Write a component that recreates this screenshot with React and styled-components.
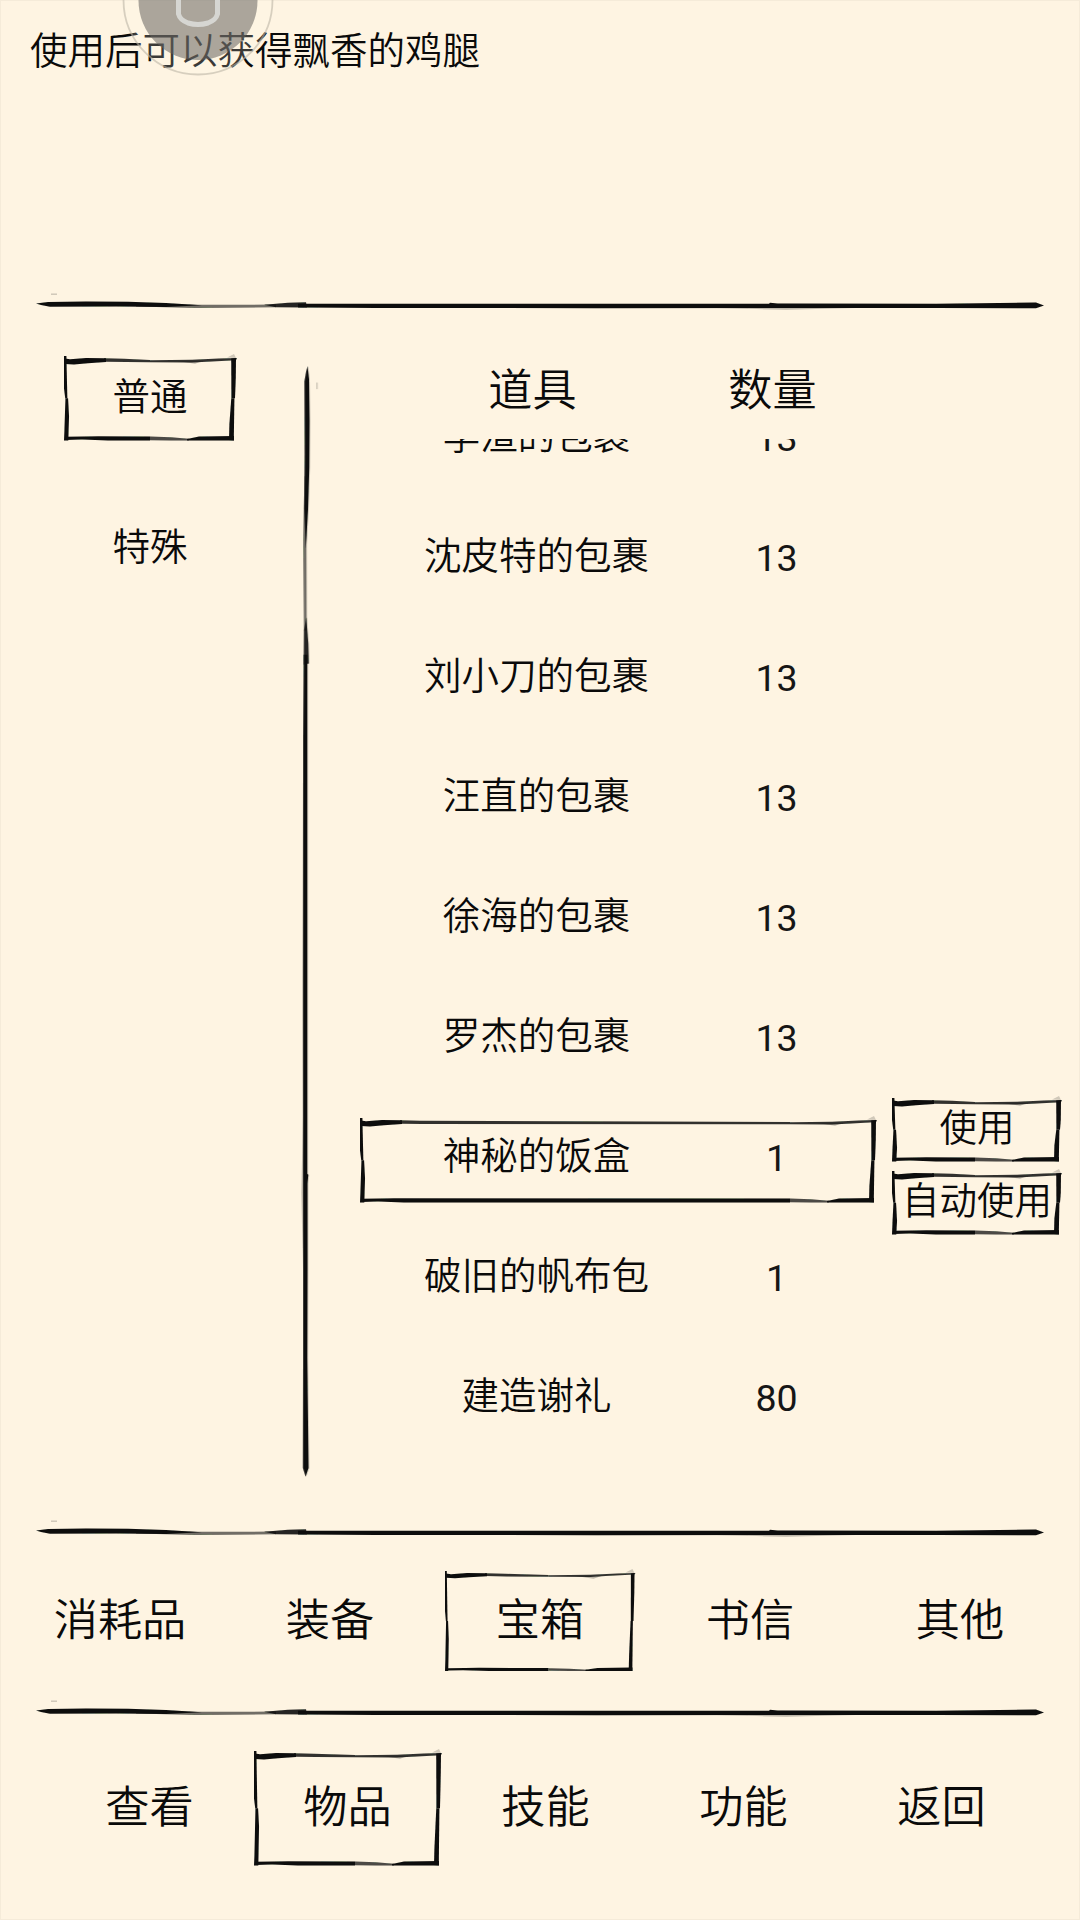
import React, { useState } from "react";
import styled, { createGlobalStyle } from "styled-components";

const GlobalStyle = createGlobalStyle`
  body {
    margin: 0;
    background: #fef4e2;
  }
`;

const Screen = styled.div`
  position: relative;
  display: flex;
  flex-direction: column;
  box-sizing: border-box;
  width: 1080px;
  height: 1920px;
  overflow: hidden;
  background: #fef4e2;
  box-shadow: inset 0 0 0 1px #f5ebd9;
  color: #0a0a0a;
  font-family: Roboto, 'Noto Sans CJK SC', sans-serif;
  font-size: 37.5px;
  font-weight: 350;
  line-height: 44px;
`;

const Description = styled.div`
  box-sizing: border-box;
  height: 294px;
  padding: 29px 30px 0;
`;

const Main = styled.div`
  display: flex;
  height: 1207px;
`;

const Sidebar = styled.div`
  display: flex;
  flex-direction: column;
  align-items: center;
  gap: 65px;
  box-sizing: border-box;
  width: 296px;
  padding: 42px 0 0 4px;
`;

const Cell = styled.button`
  position: relative;
  display: flex;
  align-items: center;
  justify-content: center;
  flex-shrink: 0;
  width: ${props => props.$w}px;
  height: ${props => props.$h}px;
  padding: 0 0 ${props => props.$lift || 0}px;
  box-sizing: border-box;
  border: 0;
  background: none;
  color: inherit;
  font: inherit;
  white-space: nowrap;
  cursor: pointer;
`;

const Content = styled.div`
  flex: 1;
  padding-left: 44px;
`;

const Header = styled.div`
  display: grid;
  grid-template-columns: 345px 135px;
  align-items: center;
  justify-items: center;
  box-sizing: border-box;
  height: 125px;
  padding-top: 28px;
  font-size: 44.2px;
`;

const Viewport = styled.div`
  height: 1050px;
  overflow: hidden;
`;

const List = styled.div`
  margin-top: -65px;
`;

const Row = styled.div`
  position: relative;
  display: grid;
  grid-template-columns: 353px 127px 52px 168px;
  grid-template-rows: 120px;
  align-items: center;
  justify-items: center;
  height: 120px;
  cursor: pointer;
`;

const Name = styled.span`
  padding-top: 3px;
`;

const Count = styled.span`
  padding-top: 7px;
  color: #161616;
  font-weight: 400;
`;

const Actions = styled.div`
  grid-column: 4;
  align-self: start;
  justify-self: start;
  display: flex;
  flex-direction: column;
  gap: 9px;
  padding-top: 4px;
`;

const Bar = styled.div`
  display: flex;
  align-items: center;
  justify-content: center;
  height: ${props => props.$h}px;
  padding-left: ${props => props.$indent || 0}px;
  font-size: 44.2px;
`;

const FrameSvg = styled.svg`
  position: absolute;
  left: ${props => props.$x || 0}px;
  top: ${props => props.$y || 0}px;
  overflow: visible;
  pointer-events: none;
`;

const LineSvg = styled.svg`
  display: block;
  flex-shrink: 0;
  margin-left: ${props => props.$ml || 0}px;
  overflow: visible;
`;

const FloatBall = styled.svg`
  position: absolute;
  left: 122px;
  top: 0;
`;

// Brush box: corners keep their size, the edges stretch with w and h.
const InkFrame = ({ w, h, x, y, t = 1.2 }) => {
  const m = h / 2;
  const b = h - 3.5 * t;
  const c = w - 87;
  return (
    <FrameSvg $x={x} $y={y} width={w} height={h} fill="#0b0d0c">
      <g filter="url(#soft)">
        <path d={`M0 0 L${2 * t} 0 L${2.8 * t} ${m} L${t} ${m} L0 ${m - 10} Z`} />
        <path d={`M${1.2 * t} ${m} L${3.4 * t} ${m} L${4.2 * t} ${m + 18} L${3.6 * t} ${h} L0 ${h} L${0.4 * t} ${h - 12} Z`} />
        <path d={`M1 2.5 L6 3.2 L22 2 L42 2.2 L42 ${3 + 2.6 * t} L24 ${3 + 3.6 * t} L10 ${3 + 4.6 * t} L1 ${3 + 4.2 * t} Z`} />
        <path d={`M40 2.2 L60 2.8 L${c} 4 L${c} ${4 + 1.9 * t} L62 ${3.4 + 2.2 * t} L40 ${3 + 2.3 * t} Z`} opacity="0.85" />
        <path d={`M${c} 4.2 L${w - 45} 3.7 L${w - 18} 2.4 L${w} 2 L${w - 1} ${2 + 1.8 * t} L${w - 30} ${3 + 2.2 * t} L${w - 45} ${4 + 2.1 * t} L${c} ${4.2 + 1.7 * t} Z`} opacity="0.85" />
        <path d={`M${w - 60} 5 L${w - 34} 5 L${w - 42} 7.8 Z`} opacity="0.25" />
        <path d={`M${w - 10} 1.5 L${w - 3} -2 L${w - 1} 2 Z`} opacity="0.18" />
        <path d={`M${w - 4 * t - 1} 2.6 L${w - 1} 2 L${w - 1.2} 22 L${w - 2} ${m} L${w - 2 - 3 * t} ${m} Z`} />
        <path d={`M${w - 2.6 - 2.6 * t} ${m} L${w - 2.6} ${m} L${w - 3.2} ${h} L${w - 3.2 - 4 * t} ${h - 0.5} L${w - 2.6 - 4.2 * t} ${h - 16} Z`} />
        <path d={`M2 ${b + 0.4} L20 ${b + 0.2} L34 ${b} L${c} ${b + 0.2} L${c} ${h} L44 ${h} L18 ${b + 2.6 * t} L2 ${h - 0.4} Z`} />
        <path d={`M${c} ${b + 0.3} L${w - 66} ${b + 1} L${w - 48} ${b + 2 * t} L${w - 48} ${h} L${w - 66} ${h} L${c} ${h - 0.2} Z`} opacity="0.75" />
        <path d={`M${w - 50} ${b + 2.2 * t} L${w - 38} ${b + 0.2} L${w - 3} ${b - 0.4} L${w - 3} ${h} L${w - 50} ${h} Z`} />
      </g>
    </FrameSvg>
  );
};

const Stroke = () => (
  <g fill="#0b0d0c" filter="url(#soft)">
    <path d="M0 9.4 L12 8 L50 7.4 L92 7.8 L130 9 L166 11.2 L130 12.9 L80 12.6 L14 12.8 L5 11 Z" />
    <path d="M100 10 L160 10.8 L240 10.6 L240 13.2 L160 14 L100 12.6 Z" opacity="0.6" />
    <path d="M228 10.8 L252 8.8 L270 8.2 L271 13.6 L240 13.2 Z" opacity="0.9" />
    <path d="M262 9.8 L420 9.7 L733 9.7 L734 8.8 L742 9.5 L900 9.7 L1000 8.6 L1008 11.4 L1000 14.2 L900 14 L560 14.2 L340 14 L262 13.6 Z" />
    <path d="M680 14 L820 14 L750 15.8 Z" opacity="0.25" />
    <path d="M15 -0.5 h6 v1.4 h-6 z" opacity="0.2" />
  </g>
);

const InkLine = () => (
  <LineSvg $ml={36} width="1008" height="20">
    <Stroke />
  </LineSvg>
);

const InkLineVertical = () => (
  <LineSvg width="20" height="1207">
    <g transform="translate(21.2 52) rotate(90) scale(1.102 1)">
      <Stroke />
    </g>
  </LineSvg>
);

const kinds = ["普通", "特殊"];
const items = [
  { name: "李渣的包裹", count: 13 },
  { name: "沈皮特的包裹", count: 13 },
  { name: "刘小刀的包裹", count: 13 },
  { name: "汪直的包裹", count: 13 },
  { name: "徐海的包裹", count: 13 },
  { name: "罗杰的包裹", count: 13 },
  { name: "神秘的饭盒", count: 1 },
  { name: "破旧的帆布包", count: 1 },
  { name: "建造谢礼", count: 80 },
];
const actions = ["使用", "自动使用"];
const categories = ["消耗品", "装备", "宝箱", "书信", "其他"];
const menu = ["查看", "物品", "技能", "功能", "返回"];

const App = () => {
  const [kind, setKind] = useState(0);
  const [item, setItem] = useState(6);
  const [category, setCategory] = useState(2);
  const [page, setPage] = useState(1);

  return (
    <Screen>
      <GlobalStyle />
      <Description>使用后可以获得飘香的鸡腿</Description>
      <InkLine />

      <Main>
        <Sidebar>
          {kinds.map((label, i) => (
            <Cell key={label} $w={172} $h={85} $lift={4} onClick={() => setKind(i)}>
              {kind === i && <InkFrame w={173} h={84.5} />}
              {label}
            </Cell>
          ))}
        </Sidebar>
        <InkLineVertical />
        <Content>
          <Header>
            <span>道具</span>
            <span>数量</span>
          </Header>
          <Viewport>
            <List>
              {items.map((it, i) => (
                <Row key={it.name} onClick={() => setItem(i)}>
                  {item === i && <InkFrame w={517} h={84.5} x={0} y={24} />}
                  <Name>{it.name}</Name>
                  <Count>{it.count}</Count>
                  {item === i && (
                    <Actions>
                      {actions.map((label) => (
                        <Cell key={label} $w={170} $h={64} $lift={4}>
                          <InkFrame w={170} h={63.5} x={-0.5} />
                          {label}
                        </Cell>
                      ))}
                    </Actions>
                  )}
                </Row>
              ))}
            </List>
          </Viewport>
        </Content>
      </Main>

      <InkLine />
      <Bar $h={160}>
        {categories.map((label, i) => (
          <Cell key={label} $w={210} $h={100} $lift={1} onClick={() => setCategory(i)}>
            {category === i && <InkFrame w={190.5} h={100} x={10} t={0.9} />}
            {label}
          </Cell>
        ))}
      </Bar>
      <InkLine />
      <Bar $h={175} $indent={11}>
        {menu.map((label, i) => (
          <Cell key={label} $w={198} $h={115} $lift={1} onClick={() => setPage(i)}>
            {page === i && <InkFrame w={188} h={114.5} x={5.5} />}
            {label}
          </Cell>
        ))}
      </Bar>

      <FloatBall width="152" height="78">
        <defs>
          <filter id="soft" x="-10" y="-10" width="1100" height="1300" filterUnits="userSpaceOnUse">
            <feGaussianBlur stdDeviation="0.65" />
          </filter>
        </defs>
        <circle cx="76" cy="0" r="74.5" fill="#fff8ea" fillOpacity="0.2" stroke="#bdb6a6" strokeOpacity="0.6" strokeWidth="1.8" />
        <circle cx="76" cy="0.5" r="59.5" fill="#64625f" fillOpacity="0.54" />
        <path d="M56.5 -10 V14 Q58 20 66 23 Q76 26 86 23 Q94 20 95.5 14 V-10" fill="none" stroke="#d6d6d2" strokeWidth="5" />
      </FloatBall>
    </Screen>
  );
};

export default App;
